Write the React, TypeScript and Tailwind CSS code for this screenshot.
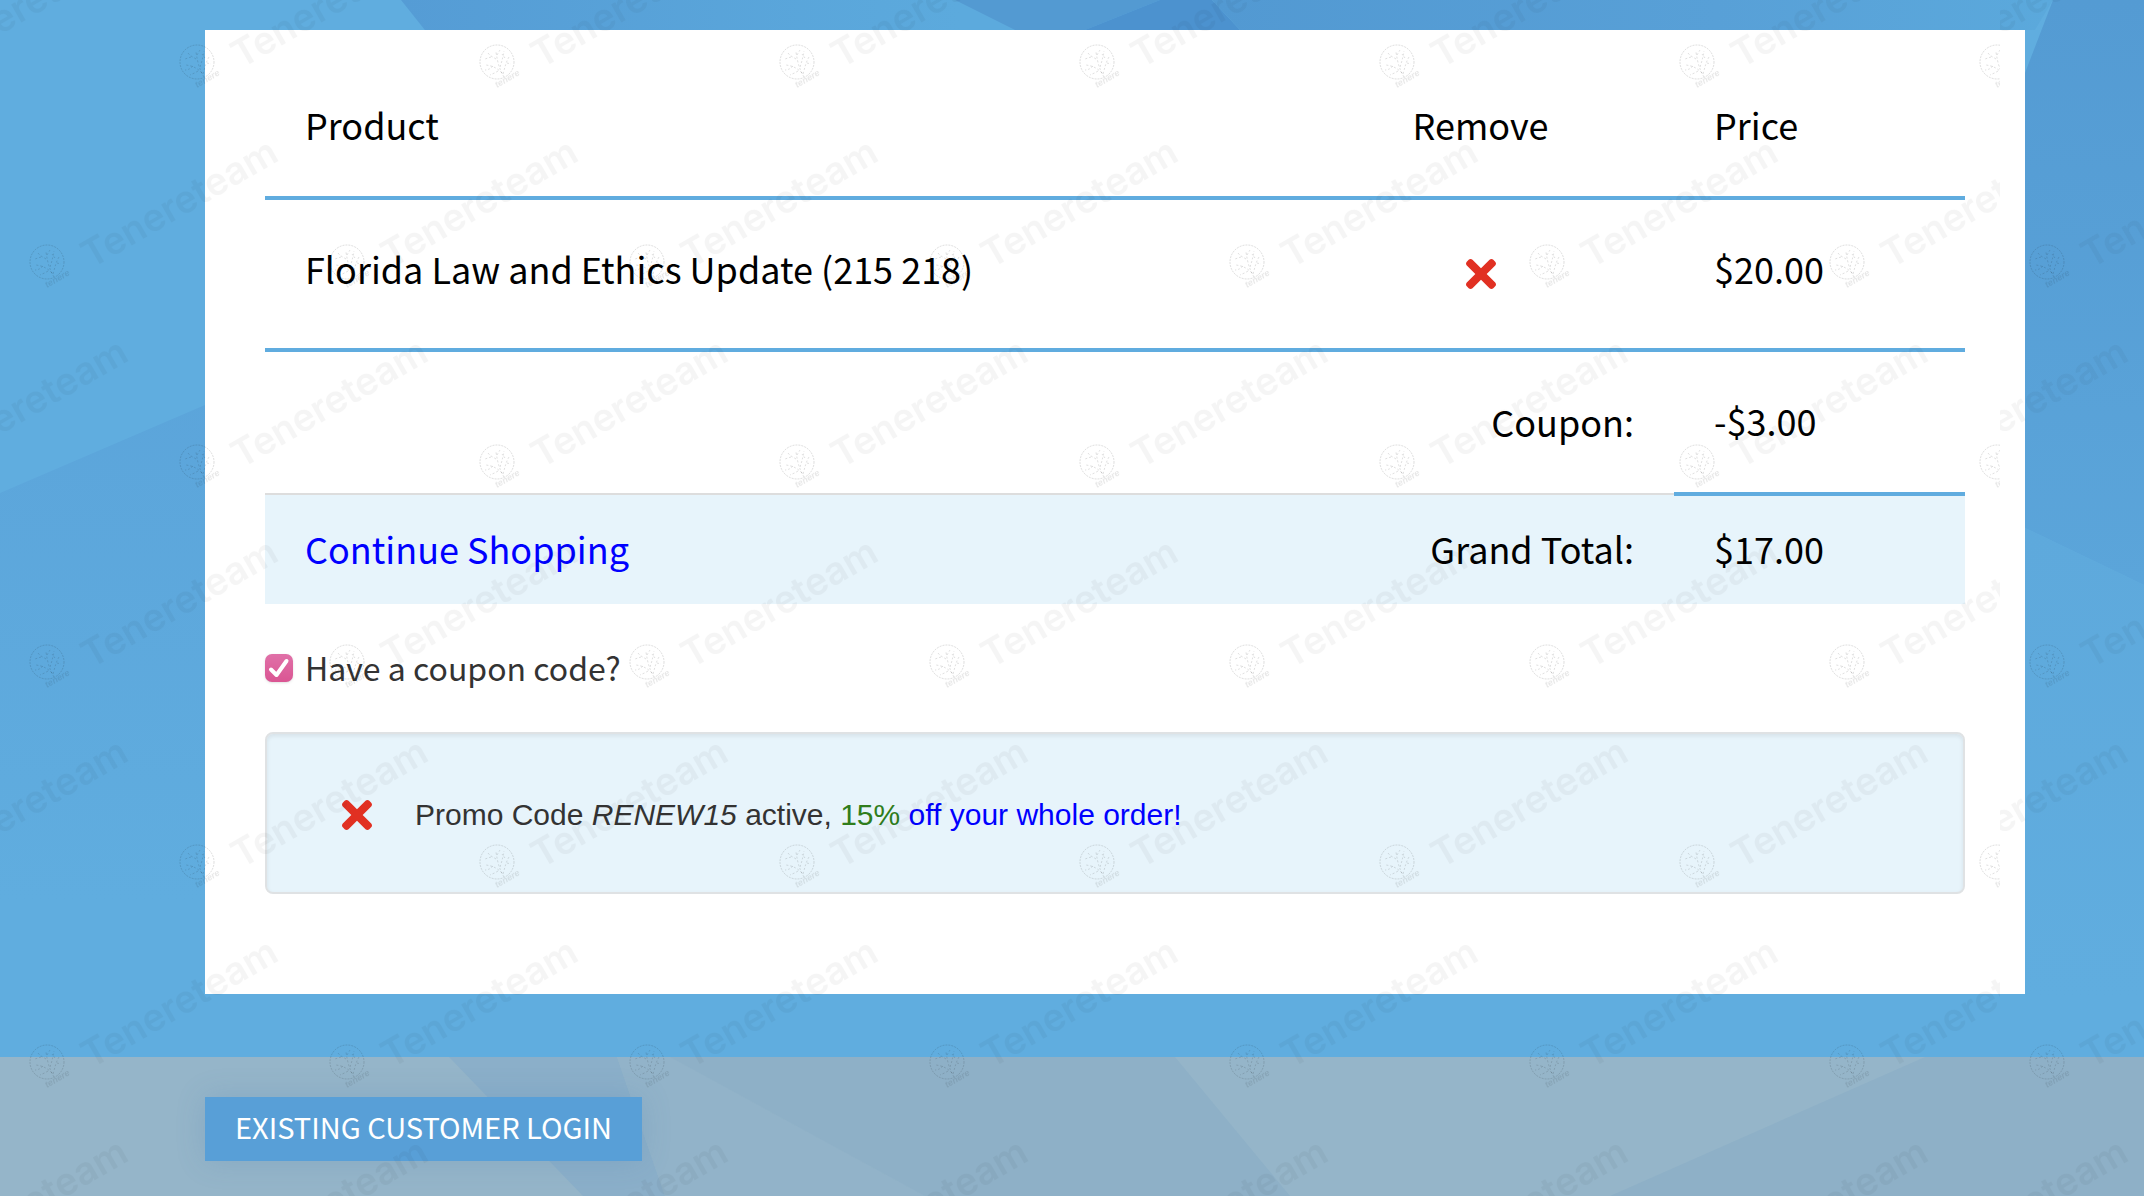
import React, { useState } from 'react';
import { FaTimes } from 'react-icons/fa';

interface CartItem {
  id: string;
  name: string;
  price: number;
}

const cartItems: CartItem[] = [
  { id: '1', name: 'Florida Law and Ethics Update (215 218)', price: 20 }
];

const coupon = { code: 'RENEW15', percent: 15 };

const formatPrice = (value: number) =>
  `${value < 0 ? '-' : ''}$${Math.abs(value).toFixed(2)}`;

function PageBackground() {
  return (
    <svg
      className="absolute inset-0 -z-10 h-full w-full"
      viewBox="0 0 2144 1196"
      preserveAspectRatio="none"
      aria-hidden="true"
    >
      <defs>
        <linearGradient id="top-left" x1="0" x2="1">
          <stop offset="0" stopColor="#559cd5" />
          <stop offset="0.8" stopColor="#5caadd" />
        </linearGradient>
        <linearGradient id="top-right" x1="0" x2="1">
          <stop offset="0" stopColor="#5299d2" />
          <stop offset="0.6" stopColor="#58a0d7" />
          <stop offset="1" stopColor="#5ba9dc" />
        </linearGradient>
        <linearGradient id="left-wedge" x1="0" y1="0" x2="0" y2="1">
          <stop offset="0" stopColor="#5aa2d9" />
          <stop offset="1" stopColor="#60addf" />
        </linearGradient>
        <linearGradient id="right-band" x1="0" y1="0" x2="0" y2="1">
          <stop offset="0" stopColor="#549bd3" />
          <stop offset="1" stopColor="#5ba5da" />
        </linearGradient>
        <linearGradient id="right-bottom" x1="0" y1="0" x2="0" y2="1">
          <stop offset="0" stopColor="#5ea9dc" />
          <stop offset="1" stopColor="#60addf" />
        </linearGradient>
      </defs>
      <rect width="2144" height="1196" fill="#60addf" />
      <polygon points="0,493 205,405 640,220 640,900 0,900" fill="url(#left-wedge)" />
      <polygon points="401,0 955,0 1015,30 1100,200 560,200" fill="url(#top-left)" />
      <polygon points="955,0 1160,0 1085,30 1015,30" fill="#539ad2" />
      <polygon points="1160,0 1212,0 1240,30 1085,30" fill="#4c92cf" />
      <polygon points="1212,0 2053,0 2035,30 1240,30" fill="url(#top-right)" />
      <polygon points="2053,0 2144,0 2144,585 2025,528 2025,73" fill="url(#right-band)" />
      <polygon points="2025,528 2144,585 2144,1000 2025,1000" fill="url(#right-bottom)" />
    </svg>
  );
}

function FooterBackground() {
  return (
    <svg
      className="absolute inset-0 -z-10 h-full w-full"
      viewBox="0 0 2144 139"
      preserveAspectRatio="none"
      aria-hidden="true"
    >
      <rect width="2144" height="139" fill="#95b5c9" />
      <polygon points="449,0 617,0 665,139 583,139" fill="#8bafc9" />
      <polygon points="617,0 670,0 925,139 665,139" fill="#92b3c9" />
      <polygon points="670,0 1175,0 1290,139 925,139" fill="#8eb0c7" />
      <polygon points="1925,0 2144,0 2144,139 1610,139" fill="#8eb0c7" />
    </svg>
  );
}

function WatermarkMark({ x, y }: { x: number; y: number }) {
  return (
    <g transform={`translate(${x} ${y})`}>
      <g fill="none" stroke="#000" strokeOpacity="0.12" strokeWidth="1">
        <circle r="17" strokeDasharray="2 1" />
        <path
          d="M7 15C3 8 1 3-1-10M5 11C0 6-4 4-11 3M6 12C8 5 9 0 12-5M3 5C5-1 6-5 7-11M-1-3C-4-5-7-6-9-9M-4 4C-7 7-9 8-12 8M1 9C-2 11-5 12-7 13M10 1L14 2M0-7L3-12M-6-5L-12-3M8-4L5-8"
          strokeDasharray="2 2"
        />
      </g>
      <text
        transform="translate(0 26) rotate(-30)"
        fontFamily="Liberation Sans, sans-serif"
        fontSize="9"
        fontWeight="700"
        fontStyle="italic"
        fillOpacity="0.09"
      >
        tenere
      </text>
      <text
        transform="translate(44 7) rotate(-30)"
        fontFamily="Inter, sans-serif"
        fontSize="38"
        fontWeight="600"
        fillOpacity="0.04"
      >
        Tenereteam
      </text>
    </g>
  );
}

// The pattern repeats every 300x400 and starts over after 2000px
function Watermark() {
  return (
    <svg className="pointer-events-none absolute inset-0 h-full w-full" aria-hidden="true">
      <defs>
        <pattern id="watermark" width="300" height="400" patternUnits="userSpaceOnUse">
          <WatermarkMark x={47} y={262} />
          <WatermarkMark x={197} y={62} />
          <WatermarkMark x={-103} y={62} />
          <WatermarkMark x={197} y={462} />
          <WatermarkMark x={-103} y={462} />
        </pattern>
      </defs>
      <rect width="2000" height="100%" fill="url(#watermark)" />
      <g transform="translate(2000 0)">
        <rect width="2000" height="100%" fill="url(#watermark)" />
      </g>
    </svg>
  );
}

function RemoveButton({ label, onClick }: { label: string; onClick: () => void }) {
  return (
    <button type="button" aria-label={label} onClick={onClick} className="block cursor-pointer text-[#e13022]">
      <FaTimes className="h-[44px] w-[30px]" />
    </button>
  );
}

export default function App() {
  const [items, setItems] = useState<CartItem[]>(cartItems);
  const [showCoupon, setShowCoupon] = useState(true);
  const [couponActive, setCouponActive] = useState(true);

  const subtotal = items.reduce((sum, item) => sum + item.price, 0);
  const discount = couponActive ? (subtotal * coupon.percent) / 100 : 0;

  return (
    <div className="relative isolate flex min-h-screen flex-col overflow-hidden font-['Noto_Sans_CJK_SC','Noto_Sans',sans-serif] font-normal text-[#333]">
      <PageBackground />

      {/* Cart */}
      <main className="mt-[30px] mr-[119px] mb-[63px] ml-[205px] bg-white px-[60px] pt-[30px] pb-[100px]">
        <table className="w-full table-fixed border-collapse text-[36px] leading-[48px] text-black">
          <colgroup>
            <col />
            <col className="w-[387px]" />
            <col className="w-[291px]" />
          </colgroup>
          <thead>
            <tr className="border-b-4 border-[#60acdf]">
              <th className="px-[40px] pt-[40px] pb-[48px] text-left font-normal">Product</th>
              <th className="px-[40px] pt-[40px] pb-[48px] text-center font-normal">Remove</th>
              <th className="px-[40px] pt-[40px] pb-[48px] text-left font-normal">Price</th>
            </tr>
          </thead>
          <tbody>
            {items.map((item) => (
              <tr key={item.id} className="border-b-4 border-[#60acdf]">
                <td className="px-[40px] pt-[44px] pb-[56px]">{item.name}</td>
                <td className="px-[40px] pt-[44px] pb-[52px]">
                  <div className="flex h-[52px] items-end justify-center">
                    <RemoveButton
                      label={`Remove ${item.name}`}
                      onClick={() => setItems((prev) => prev.filter((i) => i.id !== item.id))}
                    />
                  </div>
                </td>
                <td className="px-[40px] pt-[44px] pb-[56px]">{formatPrice(item.price)}</td>
              </tr>
            ))}
            <tr>
              <td colSpan={2} className="border-b-2 border-[#ddd] px-[40px] pt-[44px] pb-[48px] text-right">
                Coupon:
              </td>
              <td className="border-b-4 border-[#60acdf] px-[40px] pt-[44px] pb-[48px]">
                {formatPrice(-discount)}
              </td>
            </tr>
            <tr className="bg-[#e7f4fb]">
              <td className="px-[40px] pt-[28px] pb-[32px]">
                <a href="#" className="text-[#0000ff]">Continue Shopping</a>
              </td>
              <td className="px-[40px] pt-[28px] pb-[32px] text-right">Grand Total:</td>
              <td className="px-[40px] pt-[28px] pb-[32px]">{formatPrice(subtotal - discount)}</td>
            </tr>
          </tbody>
        </table>

        {/* Coupon toggle */}
        <div className="mt-[40px] flex h-[48px] items-center gap-[12px]">
          <span className="relative block size-[28px]">
            <input
              id="have-coupon"
              type="checkbox"
              checked={showCoupon}
              onChange={(e) => setShowCoupon(e.target.checked)}
              className="block size-[28px] appearance-none rounded-[7px] border border-gray-300 bg-white shadow-sm checked:border-0 checked:bg-linear-to-b checked:from-[#e070a8] checked:to-[#da5593]"
            />
            {showCoupon && (
              <svg
                viewBox="0 0 28 28"
                className="pointer-events-none absolute inset-0 size-[28px]"
                fill="none"
                stroke="#fff"
                strokeWidth="4"
                strokeLinecap="round"
                strokeLinejoin="round"
              >
                <path d="M6 15.5L11.5 21L21.5 7" />
              </svg>
            )}
          </span>
          <label htmlFor="have-coupon" className="pb-[2px] text-[32px] leading-[40px]">
            Have a coupon code?
          </label>
        </div>

        {/* Active promo code */}
        {showCoupon && (
          <div className="mt-[40px] flex min-h-[162px] items-center gap-[43px] rounded-[8px] border-2 border-[#dfe2e4] bg-[#e7f4fb] px-[75px] pt-[4px] font-['Liberation_Sans',Arial,sans-serif] text-[30px] leading-[40px] shadow-[inset_0_2px_4px_rgba(0,0,0,0.08)]">
            {couponActive && (
              <>
                <RemoveButton label="Remove promo code" onClick={() => setCouponActive(false)} />
                <p>
                  Promo Code <em>{coupon.code}</em> active,{' '}
                  <span className="text-[#2f7d1c]">{coupon.percent}%</span>{' '}
                  <span className="text-[#0000ff]">off your whole order!</span>
                </p>
              </>
            )}
          </div>
        )}
      </main>

      {/* Footer */}
      <footer className="relative isolate flex-1 px-[205px] pt-[40px] pb-[35px]">
        <FooterBackground />
        <button
          type="button"
          className="block h-[64px] cursor-pointer bg-[#589fd7] px-[30px] pb-[6px] text-[29px] leading-[40px] text-white uppercase shadow-[0_0_30px_rgba(70,120,170,0.2)]"
        >
          Existing Customer Login
        </button>
      </footer>

      <Watermark />
    </div>
  );
}
